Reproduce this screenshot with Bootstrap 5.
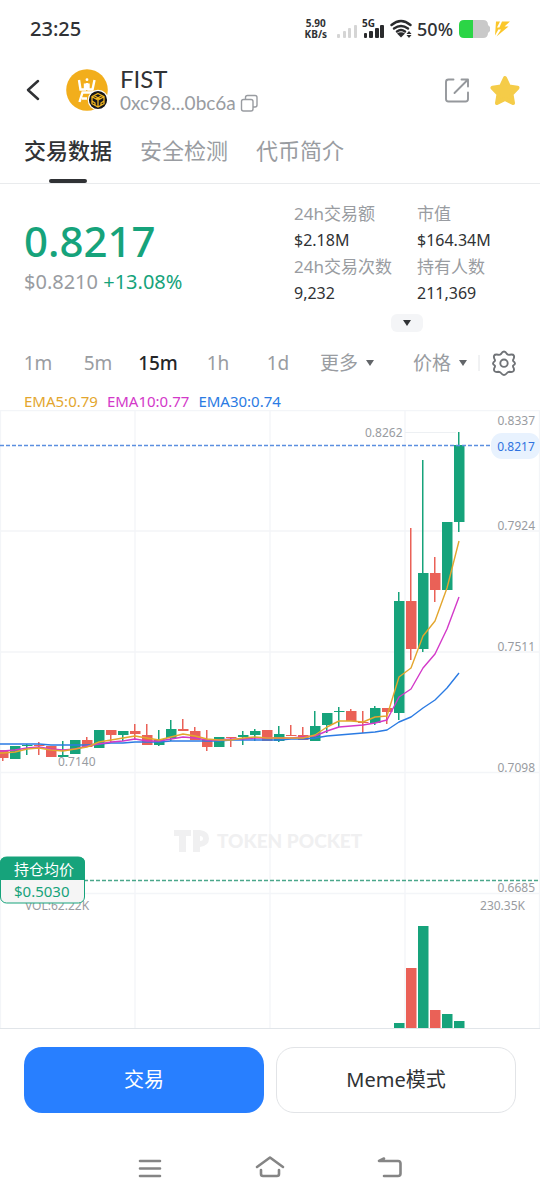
<!DOCTYPE html>
<html lang="zh-CN">
<head>
<meta charset="utf-8">
<meta name="viewport" content="width=device-width, initial-scale=1">
<title>FIST</title>
<link href="https://cdn.jsdelivr.net/npm/bootstrap@5.3.0/dist/css/bootstrap.min.css" rel="stylesheet">
<style>
:root{--up:#16a37b;--down:#ea6157;--ink:#303235;--muted:#999ca1;--line:#e9ebed;--brand:#287fff}
body{font-family:"Noto Sans","Noto Sans CJK SC",sans-serif;color:var(--ink);background:#fff;line-height:1.2}
svg{display:block;flex:none}
.plain{background:none;border:0;padding:0;color:inherit;line-height:inherit}
.lato{font-family:Lato,"Noto Sans CJK SC",sans-serif}
.muted{color:var(--muted)}
.up{color:var(--up)}
.status{height:58px;padding:0 25px 0 30px}
.clock{font-size:20px;font-weight:500}
.rate{font-size:10px;line-height:11px;font-weight:700}
.percent{font-size:18px;line-height:24px;font-weight:500;margin:0 6px 0 5px}
.topbar{height:64px;padding:0 19px 0 24px}
.coin{font-size:24px;line-height:26px}
.addr{font-size:19px;line-height:22px}
.fav{margin-left:17px}
.tabs{height:62px;padding:0 24px;gap:28px;border-bottom:1px solid var(--line)}
.tabs button{font-size:22px;line-height:56px;padding-bottom:5px;color:var(--muted);position:relative}
.tabs button.active{color:var(--ink);font-weight:500}
.tabs button.active::after{content:"";position:absolute;left:50%;bottom:0;width:38px;height:4px;margin-left:-19px;border-radius:2px;background:var(--ink)}
.summary{padding:18px 24px 0;height:156px}
.price{font-size:42px;line-height:48px;font-weight:500;margin-top:15px}
.sub{font-size:20px;line-height:34px}
.stats{width:222px}
.stats dl{margin:0;font-size:16px}
.stats dt{font-size:17px;font-weight:400;color:var(--muted);line-height:24px}
.stats dd{margin:0;line-height:29px}
.stats .c1{width:123px}
.expand{width:32px;height:18px;margin:6px 0 0 4px;border-radius:6px;background:#f4f5f7}
.frames{height:46px;padding:0 23px 0 8px;font-size:19px;color:var(--muted)}
.frames .cell{width:60px}
.frames .active{color:#242628;font-weight:500}
.ema{padding:7px 24px 0;font-size:15px;line-height:17px;gap:9px}
.chart{width:100%;height:auto}
.actions{padding:18px 24px 0;gap:12px}
.actions .btn{height:66px;border-radius:18px;font-size:20px;flex:1 1 0}
.btn-trade,.btn-trade:hover{background:var(--brand);color:#fff}
.btn-meme,.btn-meme:hover{background:#fff;border:1px solid #e2e4e7;color:var(--ink)}
.sysnav{padding:37px 90px 0;height:87px}
.sysnav button{flex:1 1 0}
</style>
</head>
<body>
<div class="status d-flex align-items-center justify-content-between">
  <div class="clock">23:25</div>
  <div class="d-flex align-items-center">
    <div class="rate text-center">5.90<br>KB/s</div>
    <svg class="ms-2" width="77" height="24" viewBox="333 17 77 24" aria-hidden="true">
      <g fill="#d5d5d5"><rect x="335" y="34" width="3" height="4" rx="1"/><rect x="341" y="31" width="3" height="7" rx="1"/><rect x="346" y="28" width="3" height="10" rx="1"/><rect x="352" y="25" width="3" height="13" rx="1"/></g>
      <g fill="#2a2b2d"><rect x="362" y="33" width="3" height="5" rx="1"/><rect x="367" y="31" width="4" height="7" rx="1"/><rect x="373" y="28" width="4" height="10" rx="1"/><rect x="378" y="25" width="4" height="13" rx="1"/>
      <text x="360" y="27" font-size="10" font-weight="700">5G</text>
      <path d="M395 33.500Q399 31 403 33.500L399 37.500ZM404.500 34l2.500-3 2.500 3zM404.500 35l2.500 3 2.500-3z"/></g>
      <g fill="none" stroke="#2a2b2d" stroke-width="2.400" stroke-linecap="round"><path d="M389.500 25q9.500-8 19 0M392 28.500q7-5 14 0M395 31.500q4-3 8 0"/></g>
    </svg>
    <div class="percent">50%</div>
    <svg width="56" height="24" viewBox="459 17 56 24" aria-hidden="true">
      <path d="M464 20h9v18h-9q-5 0-5-5v-8q0-5 5-5z" fill="#2bd546"/><path d="M473 20h10q5 0 5 5l2 2v4l-2 2q0 5-5 5h-10z" fill="#c9c9c9"/>
      <path d="M496 21.500h4l-3 6h2.500l-4.500 8zM502 21.500h8l-5.500 5h4l-12 10 4.500-7h-2.500z" fill="#fbc72b"/>
    </svg>
  </div>
</div>

<header class="topbar d-flex align-items-center">
  <button class="plain" aria-label="返回"><svg width="18" height="24" viewBox="24 78 18 24" fill="none" stroke="#303235" stroke-width="2.500" stroke-linecap="round" stroke-linejoin="round"><path d="M38 81l-10 9 10 9"/></svg></button>
  <svg class="ms-4" width="42" height="42" viewBox="66 69 42 42" aria-hidden="true">
    <circle cx="87" cy="90" r="20.800" fill="#f2ae1c"/>
    <g fill="none" stroke="#fff" stroke-width="2.400"><path d="M79 80l1.500 9.500h4.500v-6M94.500 80l-2 9.500h-4v-6M79.500 102l3-9.500h12v3M82 98.500h5M87 83v7"/></g><circle cx="87" cy="79.700" r="1.400" fill="#fff"/>
    <circle cx="98" cy="100" r="9.700" fill="#17171b" stroke="#fff" stroke-width="1.200"/>
    <path d="M98 93.500l6 3.200v7l-6 3.300-6-3.300v-7zM92 96.700l6 3.300 6-3.300M98 100v7M94 95.500l6 3.500M102 95.500l-6 3.500M92 101l3 2v2M104 101l-3 2v2" fill="none" stroke="#f2b51e" stroke-width="1.300"/>
  </svg>
  <div class="lato flex-grow-1 ps-2 ms-1">
    <div class="coin">FIST</div>
    <div class="addr muted d-flex align-items-center">0xc98...0bc6a
      <button class="plain" aria-label="复制"><svg class="ms-1" width="18" height="18" viewBox="239 94 18 18" fill="#fff" stroke="#999ca1" stroke-width="1.400"><rect x="244.500" y="95.500" width="11.500" height="11.500" rx="2"/><rect x="240.500" y="99.500" width="11.500" height="11.500" rx="2"/></svg></button>
    </div>
  </div>
  <button class="plain" aria-label="分享"><svg width="28" height="26" viewBox="444 77 28 26" fill="none" stroke="#95989c" stroke-width="1.900" stroke-linecap="round" stroke-linejoin="round"><path d="M453.500 79.500h-5q-2.500 0-2.500 2.500v17q0 2.500 2.500 2.500h17q2.500 0 2.500-2.500v-6.500M461.500 79.500h6.500v7M467.500 80l-13 13"/></svg></button>
  <button class="plain fav" aria-label="收藏"><svg width="32" height="32" viewBox="489 74 32 32"><path d="M505 78l4 8.500 8.500 1.300-6 6.400 1.500 8.800-8-4-8 4 1.500-8.800-6-6.400 8.500-1.300z" fill="#f5cc48" stroke="#f5cc48" stroke-width="4" stroke-linejoin="round"/></svg></button>
</header>

<nav class="tabs d-flex">
  <button class="plain active">交易数据</button><button class="plain">安全检测</button><button class="plain">代币简介</button>
</nav>

<main>
<section class="summary d-flex justify-content-between">
  <div>
    <div class="price up">0.8217</div>
    <div class="sub"><span class="muted">$0.8210</span> <span class="up">+13.08%</span></div>
  </div>
  <div class="stats d-flex flex-column">
    <div class="d-flex">
      <dl class="c1"><dt>24h交易额</dt><dd>$2.18M</dd><dt>24h交易次数</dt><dd>9,232</dd></dl>
      <dl><dt>市值</dt><dd>$164.34M</dd><dt>持有人数</dt><dd>211,369</dd></dl>
    </div>
    <button class="plain expand align-self-center d-flex align-items-center justify-content-center" aria-label="展开"><svg width="10" height="6"><path d="M1 0h8L5 6z" fill="#303235"/></svg></button>
  </div>
</section>

<div class="frames d-flex align-items-center">
  <button class="plain cell">1m</button><button class="plain cell">5m</button><button class="plain cell active">15m</button><button class="plain cell">1h</button><button class="plain cell">1d</button>
  <button class="plain d-flex align-items-center gap-2 ms-2 ps-1">更多<svg width="8" height="6"><path d="M0 0h8L4 6z" fill="#626569"/></svg></button>
  <div class="d-flex align-items-center ms-auto">
    <button class="plain d-flex align-items-center gap-1">价格<svg class="ms-1" width="8" height="6"><path d="M0 0h8L4 6z" fill="#626569"/></svg></button>
    <svg class="ms-2 me-2" width="8" height="16"><path d="M4 0v16" stroke="#e2e4e7"/></svg>
    <button class="plain" aria-label="设置"><svg width="26" height="26" viewBox="0 0 26 26" fill="none" stroke="#707377" stroke-width="1.900" stroke-linejoin="round"><path d="M10 4q1.500-2.500 3-2.500T16 4q1 1 2.500.8Q22 4 22.800 5.500T22.500 9q-.8 1-.3 2 1.800 1.500 1.800 2.500t-1.800 2q-.5 1 .3 2.200 1 2 .1 3.300t-4.100.8Q17 21.800 16 23q-1.500 2-3 2t-3-2q-1-1.200-2.500-1.200-3.200.5-4.100-.8t.1-3.300q.8-1.200.3-2.200Q2 14.500 2 13.500T3.800 11q.5-1-.3-2-1.100-2-.3-3.500t4.300-.7Q9 5 10 4z"/><circle cx="13" cy="13.200" r="3.700"/></svg></button>
  </div>
</div>

<div class="ema d-flex"><span style="color:#e3a62e">EMA5:0.79</span><span style="color:#d339c9">EMA10:0.77</span><span style="color:#2b7be3">EMA30:0.74</span></div>

<svg class="chart" viewBox="0 410 540 619" role="img" aria-label="15分钟K线图" font-size="12" fill="#999ca1">
  <path d="M0 410.500H540M0 531H540M0 652H540M0 772.500H540M0 893.500H540M.5 410V1028M135 410V1028M270 410V1028M405 410V1028M539.500 410V1028" stroke="#f3f5f8" stroke-width="1.300" fill="none"/>
  <path d="M0 1028.500H540" stroke="#e1e5e9"/>
  <g fill="#f0f0f1" font-family="Lato, sans-serif" font-weight="900">
    <path d="M174 830h17v6h-5v16h-7v-16h-5zM193 830h7q9 1 9 8.500t-9 8.500v5h-7zM200 836v5q3 0 3-2.500t-3-2.500z" fill-rule="evenodd"/>
    <text x="217" y="848" font-size="19">TOKEN POCKET</text>
  </g>
  <path d="M405 432.500H456" stroke="#edf0f3"/>
  <g id="candles"></g>
  <g id="averages" fill="none" stroke-width="1.400" stroke-linejoin="round"></g>
  <path d="M0 445.500H491" stroke="#5b8fe0" stroke-width="1.300" stroke-dasharray="4 2"/>
  <path d="M84 880.500H540" stroke="#4ba78b" stroke-width="1.300" stroke-dasharray="4 2"/>
  <text x="365" y="437">0.8262</text><text x="58" y="766">0.7140</text>
  <g text-anchor="end"><text x="535" y="425">0.8337</text><text x="535" y="530">0.7924</text><text x="535" y="651">0.7511</text><text x="535" y="772">0.7098</text><text x="535" y="892">0.6685</text><text x="525" y="910">230.35K</text></g>
  <rect x="491" y="433" width="49" height="26" rx="11" fill="#e8f2fe"/><text x="516" y="451" text-anchor="middle" fill="#2f73e0">0.8217</text>
  <text x="25" y="910">VOL:62.22K</text>
  <rect x=".5" y="857" width="84" height="46" rx="6" fill="#f5f5f5" stroke="#16a37b"/>
  <path d="M0 880v-17q0-6 6-6h73q6 0 6 6v17z" fill="#16a37b"/>
  <text x="14" y="875" font-size="15" fill="#fff">持仓均价</text><text x="14" y="897" font-size="15" fill="#16a37b">$0.5030</text>
</svg>

<div class="actions d-flex">
  <button class="btn btn-trade">交易</button><button class="btn btn-meme">Meme模式</button>
</div>
</main>

<nav class="sysnav d-flex align-items-start" aria-label="系统导航">
  <button class="plain d-flex justify-content-center" aria-label="菜单"><svg width="26" height="36" viewBox="137 1150 26 36" stroke="#858585" stroke-width="2.600" stroke-linecap="round"><path d="M140 1161h20M140 1168.500h20M140 1176h20"/></svg></button>
  <button class="plain d-flex justify-content-center" aria-label="主页"><svg width="32" height="36" viewBox="254 1150 32 36" fill="none" stroke="#858585" stroke-width="2.600" stroke-linecap="round" stroke-linejoin="round"><path d="M257 1167l13-9.500 13 9.500M261 1170v4q0 2 2 2h14q2 0 2-2v-4"/></svg></button>
  <button class="plain d-flex justify-content-center" aria-label="返回上级"><svg width="30" height="36" viewBox="375 1150 30 36" fill="none" stroke="#858585" stroke-width="2.600" stroke-linecap="round" stroke-linejoin="round"><path d="M384 1158.500l-5 2.500h19q2.500 0 2.500 2.500v10q0 2.500-2.500 2.500h-14"/></svg></button>
</nav>

<script src="https://cdn.jsdelivr.net/npm/bootstrap@5.3.0/dist/js/bootstrap.bundle.min.js"></script>
<script>
// Each candle: rising?, high, body top, body bottom, low (chart units)
const candles = [[0,750,750,758,761],[1,746,746,759,759],[1,744,745,746,755],[0,742,745,746,755],[0,746,746,757,757],[1,741,755,757,757],[1,740,740,754,754],[0,737,740,747,747],[1,730,730,748,748],[0,730,730,735,743],[1,731,731,735,741],[0,724,731,734,740],[0,724,735,745,745],[1,730,739,745,746],[1,720,729,738,741],[0,719,729,731,731],[0,727,731,740,740],[0,730,740,747,751],[1,737,737,747,747],[0,737,737,738,747],[1,731,735,737,745],[1,729,731,735,741],[0,730,730,741,741],[1,726,734,741,742],[0,725,735,736,736],[0,727,735,740,740],[1,711,726,741,741],[1,713,713,725,733],[1,707,711,712,727],[0,709,711,721,721],[0,711,722,723,733],[1,706,708,723,725],[0,708,708,712,724],[1,592,601,713,720],[0,528,601,649,660],[1,460,573,649,652],[0,557,573,590,602],[1,522,522,590,590],[1,432,445,522,532]];
const volumes = {33:5,34:60,35:102,36:18,37:14,38:7};
const averages = {
  '#2b7be3':[744,744,744,744,745,745,745,745,744,743,743,742,742,742,741,741,741,741,741,740,740,740,740,740,739,739,738,736,735,734,733,732,730,722,717,708,700,688,673],
  '#d339c9':[751,750,748,747,749,750,749,746,744,742,741,739,741,741,739,737,738,740,740,739,739,738,738,738,738,737,736,731,727,726,725,723,720,697,689,668,654,629,597],
  '#e3a62e':[753,752,749,748,750,751,749,747,742,740,738,736,738,740,737,734,736,739,740,740,738,737,738,738,738,738,735,727,721,721,722,717,716,677,668,636,621,588,541]
};
const x = i => 3 + 12 * i;
document.getElementById('candles').innerHTML = candles.map(([up,hi,top,bot,lo],i) => {
  const c = up ? '#16a37b' : '#ea6157', v = volumes[i] || 0;
  return `<g fill="${c}"><rect x="${x(i)-1}" y="${hi}" width="1.500" height="${lo-hi}"/><rect x="${x(i)-5}" y="${top}" width="10.500" height="${bot-top}"/>` + (v ? `<rect x="${x(i)-5}" y="${1028-v}" width="10.500" height="${v}"/>` : '') + '</g>';
}).join('');
document.getElementById('averages').innerHTML = Object.entries(averages).map(([c,p]) => `<polyline stroke="${c}" points="-3,${p[0]} ${p.map((y,i)=>x(i)+','+y).join(' ')}"/>`).join('');
</script>
</body>
</html>
